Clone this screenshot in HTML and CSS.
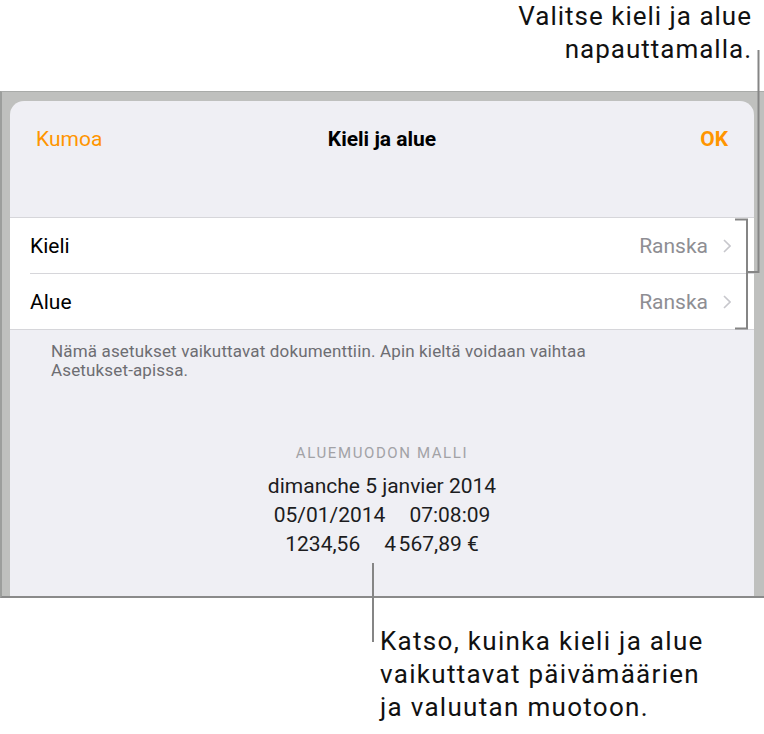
FILE: index.html
```html
<!DOCTYPE html>
<html lang="fi">
<head>
  <meta charset="UTF-8">
  <meta name="viewport" content="width=device-width, initial-scale=1.0">
  <title>Kieli ja alue</title>
  <link rel="stylesheet" href="styles.css">
</head>
<body>
  <div class="page">
    <p class="callout callout-top">Valitse kieli ja alue<br>napauttamalla.</p>

    <div class="frame">
      <div class="card">
        <header class="nav">
          <a href="#" class="nav-btn">Kumoa</a>
          <span class="nav-title">Kieli ja alue</span>
          <a href="#" class="nav-btn nav-done">OK</a>
        </header>

        <ul class="list">
          <li class="row">
            <div class="row-body">
              <span class="row-label">Kieli</span>
              <span class="row-value">Ranska</span>
              <svg class="chevron" width="8" height="14" viewBox="0 0 8 14"><path d="M1 1l6 6-6 6" fill="none" stroke="#c7c7cc" stroke-width="1.6"/></svg>
            </div>
          </li>
          <li class="row">
            <div class="row-body">
              <span class="row-label">Alue</span>
              <span class="row-value">Ranska</span>
              <svg class="chevron" width="8" height="14" viewBox="0 0 8 14"><path d="M1 1l6 6-6 6" fill="none" stroke="#c7c7cc" stroke-width="1.6"/></svg>
            </div>
          </li>
        </ul>
        <p class="list-footer">Nämä asetukset vaikuttavat dokumenttiin. Apin kieltä voidaan vaihtaa<br>Asetukset-apissa.</p>

        <div class="sample">
          <h2 class="sample-title">ALUEMUODON MALLI</h2>
          <p class="sample-line">dimanche 5 janvier 2014</p>
          <p class="sample-line"><span>05/01/2014</span><span class="gap">07:08:09</span></p>
          <p class="sample-line"><span>1234,56</span><span class="gap">4&#8239;567,89&nbsp;€</span></p>
        </div>
      </div>
    </div>

    <p class="callout callout-bottom">Katso, kuinka kieli ja alue<br>vaikuttavat päivämäärien<br>ja valuutan muotoon.</p>

    <!-- leader lines of the callouts -->
    <svg class="leaders" width="764" height="734" viewBox="0 0 764 734">
      <g fill="none" stroke="#858585" stroke-width="2">
        <path d="M735 219.5H747V328.5H735"/>
        <path d="M747 272H758.5V50"/>
        <path d="M373 563V642"/>
      </g>
    </svg>
  </div>
</body>
</html>
```

FILE: styles.css
```css
* {
  margin: 0;
  padding: 0;
  box-sizing: border-box;
  text-decoration: none;
  list-style: none;
  font-family: Roboto, 'Noto Sans', sans-serif;
}

:root {
  --orange: #ff9500;
  --grouped-bg: #efeff4;
  --separator: #d6d6da;
  --secondary: #8e8e93;
}

body {
  background: #fff;
  color: #000;
}

.page {
  position: relative;
  width: 764px;
  height: 734px;
  overflow: hidden;
}

/* Callout texts */
.callout {
  font-size: 26px;
  line-height: 33px;
  letter-spacing: 1px;
  color: #111;
}

.callout-top {
  height: 91px;
  padding-right: 12px;
  text-align: right;
}

.callout-bottom {
  padding-left: 380px;
  margin-top: 27px;
  letter-spacing: 1.3px;
}

.leaders {
  position: absolute;
  top: 0;
  left: 0;
  pointer-events: none;
}

/* Device frame */
.frame {
  background: #bfc0be;
  border-top: 1px solid #a9aba9;
  border-left: 2px solid #9c9e9c;
  border-bottom: 2px solid #8a8a8a;
  padding: 9px 10px 0 8px;
}

.card {
  background: var(--grouped-bg);
  border-radius: 14px 14px 0 0;
  height: 495px;
}

.nav {
  height: 76px;
  padding: 0 26px;
  display: grid;
  grid-template-columns: 1fr auto 1fr;
  align-items: center;
  font-size: 21px;
}

.nav-btn {
  color: var(--orange);
}

.nav-done {
  justify-self: end;
  font-weight: 700;
}

.nav-title {
  font-weight: 700;
  color: #000;
}

/* Table */
.list {
  margin-top: 40px;
  background: #fff;
  border-top: 1px solid var(--separator);
  border-bottom: 1px solid var(--separator);
}

.row {
  padding-left: 20px;
}

.row-body {
  height: 55px;
  display: flex;
  align-items: center;
  padding-right: 23px;
  font-size: 21px;
}

.row:first-child .row-body {
  height: 56px;
  border-bottom: 1px solid var(--separator);
}

.row-label {
  flex: 1;
}

.row-value {
  color: var(--secondary);
  margin-right: 15px;
}

.list-footer {
  padding-left: 41px;
  margin-top: 12px;
  font-size: 17px;
  letter-spacing: 0.15px;
  line-height: 19px;
  color: #6d6d72;
}

/* Region format example */
.sample {
  text-align: center;
  margin-top: 63px;
}

.sample-title {
  font-size: 15px;
  font-weight: 400;
  letter-spacing: 1.6px;
  color: #a2a2a6;
  line-height: 20px;
  margin-bottom: 9px;
}

.sample-line {
  font-size: 21px;
  line-height: 29px;
  color: #1c1c1e;
}

.gap {
  margin-left: 24px;
}
```
